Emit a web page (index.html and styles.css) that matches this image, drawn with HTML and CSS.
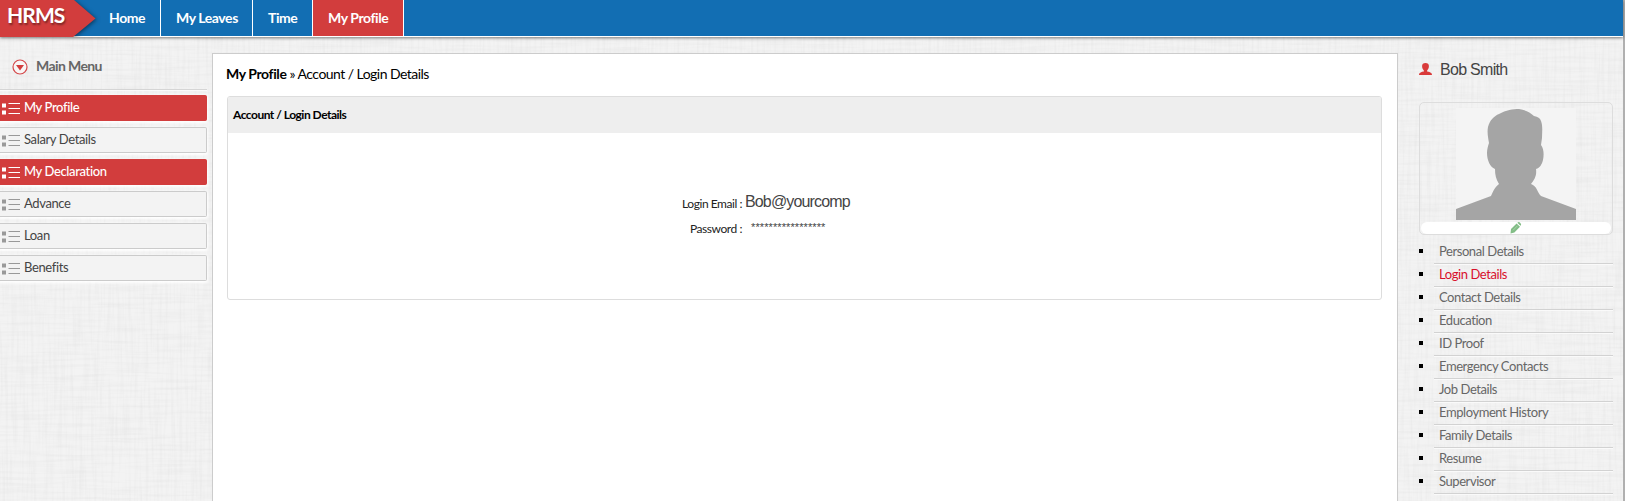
FILE: index.html
```html
<!DOCTYPE html>
<html lang="en">
<head>
<meta charset="utf-8">
<title>HRMS - Login Details</title>
<link rel="stylesheet" href="styles.css">
</head>
<body>
<svg class="texture" width="1625" height="501" aria-hidden="true">
  <filter id="warp" x="0" y="0" width="100%" height="100%"><feTurbulence type="fractalNoise" baseFrequency="0.35 0.02" numOctaves="2" seed="4"/><feColorMatrix values="0 0 0 0 0.6  0 0 0 0 0.6  0 0 0 0 0.6  0.36 0 0 0 -0.15"/></filter>
  <filter id="weft" x="0" y="0" width="100%" height="100%"><feTurbulence type="fractalNoise" baseFrequency="0.02 0.35" numOctaves="2" seed="9"/><feColorMatrix values="0 0 0 0 0.6  0 0 0 0 0.6  0 0 0 0 0.6  0.36 0 0 0 -0.15"/></filter>
  <rect width="1625" height="501" filter="url(#warp)"/>
  <rect width="1625" height="501" filter="url(#weft)"/>
</svg>
<svg class="defs" width="0" height="0" aria-hidden="true">
  <symbol id="list" viewBox="0 0 18 12"><path fill="currentColor" d="M0 .5h4v4H0zM0 7.500h4v4H0zM6.500 0h11.500v1H6.500zM6.500 5h11.500v1H6.500zM6.500 10h11.500v1H6.500z"/></symbol>
</svg>
<div class="page">
  <header class="topbar">
    <div class="brand">
      <svg class="brand-shape" width="104" height="37" viewBox="0 0 104 37"><path d="M0 0H74L95.500 18.500 73 37H0z" fill="#d23d3d"/></svg>
      <span class="brand-name">HRMS</span>
    </div>
    <nav class="nav">
      <a class="nav-item home">Home</a>
      <a class="nav-item leaves">My Leaves</a>
      <a class="nav-item time">Time</a>
      <a class="nav-item profile active">My Profile</a>
    </nav>
  </header>
  <div class="columns">
    <aside class="left">
      <div class="menu-title">
        <svg width="16" height="16" viewBox="0 0 16 16"><circle cx="8" cy="8" r="7" fill="#f8f5f5" stroke="#d4484a" stroke-width="1.200"/><path d="M4 6h8L8 11.500z" fill="#d23d3d"/></svg>
        <span>Main Menu</span>
      </div>
      <ul class="menu">
        <li class="menu-item on"><svg class="list-icon"><use href="#list"/></svg><span>My Profile</span></li>
        <li class="menu-item"><svg class="list-icon"><use href="#list"/></svg><span>Salary Details</span></li>
        <li class="menu-item on"><svg class="list-icon"><use href="#list"/></svg><span>My Declaration</span></li>
        <li class="menu-item"><svg class="list-icon"><use href="#list"/></svg><span>Advance</span></li>
        <li class="menu-item"><svg class="list-icon"><use href="#list"/></svg><span>Loan</span></li>
        <li class="menu-item"><svg class="list-icon"><use href="#list"/></svg><span>Benefits</span></li>
      </ul>
    </aside>
    <main class="content">
      <div class="crumbs"><b>My Profile</b> » Account / Login Details</div>
      <section class="card">
        <h2 class="card-title">Account / Login Details</h2>
        <div class="fields">
          <span class="label">Login Email :</span><span class="email">Bob@yourcomp</span>
          <span class="label">Password :</span><span class="password">*****************</span>
        </div>
      </section>
    </main>
    <aside class="right">
      <div class="user">
        <svg width="13" height="13" viewBox="0 0 13 13"><path fill="#d93a3a" d="M6.500 0C8.700 0 9.900 1 9.900 3c0 2-.7 3.400-1.700 4.300v1.200c1.600.5 4.800.7 4.800 3.500H0c0-2.800 3.200-3 4.800-3.500V7.300C3.800 6.400 3.100 5 3.100 3c0-2 1.200-3 3.400-3z"/></svg>
        <span>Bob Smith</span>
      </div>
      <div class="photo">
        <svg class="portrait" width="120" height="112" viewBox="0 0 120 112"><path fill="#f4f4f4" d="M0 0h120v112H0z"/><path fill="#a5a5a5" d="M0 112V101L35 88C37 84 38 80 43 76C40 71 39 67 39 61C34 59 31 52 31 45C31 41 32 38 33 35C32 29 31 24 32 19C34 12 38 8 43 6C50 2 57 1 63 1C69 2 74 4 78 8C82 9 84 10 85 13C87 18 86 25 86 30L85 37C88 41 88 47 87 52C86 56 84 60 80 61C81 68 78 72 75 76C81 78 81 84 85 88L120 101V112z"/></svg>
        <div class="edit"><svg width="12" height="12" viewBox="0 0 12 12"><path fill="#82bd86" d="M1 7 6.600 1.400 10 4.800 4.400 10.500.5 11.500zM7.300.8C8.400-.2 9.100-.2 10.100.7c1.200 1.100 1.300 2 .4 3.100z"/><path d="M3 8.300 7.500 3.800" stroke="#b8dbb9" stroke-width=".7"/></svg></div>
      </div>
      <ul class="links">
        <li><span>Personal Details</span></li>
        <li class="current"><span>Login Details</span></li>
        <li><span>Contact Details</span></li>
        <li><span>Education</span></li>
        <li><span>ID Proof</span></li>
        <li><span>Emergency Contacts</span></li>
        <li><span>Job Details</span></li>
        <li><span>Employment History</span></li>
        <li><span>Family Details</span></li>
        <li><span>Resume</span></li>
        <li><span>Supervisor</span></li>
      </ul>
    </aside>
  </div>
</div>
</body>
</html>
```
FILE: styles.css
```css
* { box-sizing: border-box; }
body { margin: 0; height: 501px; overflow: hidden; background: #f3f3f3; font-family: Lato, sans-serif; color: #000; }
ul { list-style: none; margin: 0; padding: 0; }
svg { display: block; flex: none; }
.texture { position: absolute; left: 0; top: 0; z-index: -1; }
.defs { position: absolute; }
.page { height: 501px; display: flex; flex-direction: column; border-right: 2px solid #b0b0b0; }
.topbar { height: 37px; flex: none; display: flex; background: #126eb3; border-bottom: 1px solid #fff; box-shadow: 0 1px 3px rgba(0,0,0,.5); }
.brand { position: relative; width: 95px; height: 37px; flex: none; padding: 2px 0 0 7px; }
.brand-shape { position: absolute; left: 0; top: 0; filter: drop-shadow(1px 1px 2px rgba(0,0,0,.5)); clip-path: inset(0); }
.brand-name { position: relative; font-size: 21px; line-height: 25px; font-weight: 700; letter-spacing: -.9px; color: #fff; text-shadow: 1px 2px 2px rgba(0,0,0,.4); }
.nav { display: flex; height: 36px; }
.nav-item { border-right: 1px solid #fff; padding-left: 15px; color: #fff; font-weight: 700; font-size: 14px; line-height: 36px; letter-spacing: -.42px; white-space: nowrap; }
.home { width: 66px; padding-left: 14px; }
.leaves { width: 92px; }
.time { width: 60px; }
.profile { width: 91px; }
.active { background: #d23d3d; }
.columns { display: flex; flex: 1; }
.left { width: 212px; flex: none; padding: 17px 5px 0 0; }
.menu-title { height: 36px; display: flex; gap: 8px; padding: 5px 0 0 12px; border-bottom: 1px solid #d5d5d5; box-shadow: 0 1px #fafafa; font-size: 14px; line-height: 17px; font-weight: 700; letter-spacing: -.6px; color: #666; }
.menu-title span { margin-top: -2px; }
.menu { display: flex; flex-direction: column; gap: 6px; padding-top: 5px; }
.menu-item { display: flex; height: 26px; gap: 4px; padding-left: 2px; align-items: center; border: 1px solid #cbcbcb; border-left: 0; border-radius: 0 2px 2px 0; background: #f3f3f3; box-shadow: 0 1px 3px 1px #fff; font-size: 13px; line-height: 24px; letter-spacing: -.37px; color: #444; }
.menu-item span { margin-top: -2px; }
.menu-item.on { background: #d23d3d; border-color: #d23d3d; color: #fff; font-weight: 500; }
.list-icon { width: 18px; height: 12px; color: #999; margin-top: 2px; }
.on .list-icon { color: #fff; }
.content { flex: 1; margin-top: 16px; padding: 11px 15px 0 14px; border: 1px solid #ccc; border-bottom: 0; background: #fff; }
.crumbs { margin-left: -1px; font-size: 14px; line-height: 17px; height: 31px; letter-spacing: -.54px; }
.crumbs b { font-weight: 700; letter-spacing: -.4px; }
.card { height: 204px; border: 1px solid #ddd; border-radius: 3px; overflow: hidden; }
.card-title { margin: 0; height: 36px; padding-left: 5px; background: #eee; font-size: 12px; line-height: 36px; font-weight: 700; letter-spacing: -.5px; }
.fields { display: grid; grid-template-columns: 514px auto; grid-auto-rows: 25px; column-gap: 3px; padding-top: 58px; line-height: 25px; }
.label { text-align: right; font-size: 12px; letter-spacing: -.45px; color: #222; }
.email { font: 16px/22px "Liberation Sans", sans-serif; letter-spacing: -.85px; color: #444; }
.password { padding-left: 6px; font: 11px/23px "Liberation Sans", sans-serif; letter-spacing: .1px; color: #444; }
.right { width: 225px; flex: none; padding: 26px 10px 0 21px; }
.user { display: flex; gap: 8px; font: 16px/14px "Liberation Sans", sans-serif; letter-spacing: -.7px; color: #444; height: 39px; }
.photo { width: 194px; height: 133px; border: 1px solid #ddd; border-radius: 5px; padding: 5px 1px 0; display: flex; flex-direction: column; align-items: center; }
.edit { margin-top: 2px; width: 190px; height: 12px; border-radius: 6px; background: #fff; display: flex; justify-content: center; }
.links { padding-top: 6px; }
.links li { display: flex; align-items: center; height: 23px; font-size: 13px; line-height: 20px; letter-spacing: -.43px; color: #666; gap: 11px; }
.links li::before { content: ""; width: 4px; height: 4px; margin-top: -3px; background: #000; }
.links span { flex: 1; height: 23px; padding-left: 5px; border-bottom: 1px solid #d2d2d2; box-shadow: 0 1px #fafafa; }
.links .current { color: #d8102c; }
```
